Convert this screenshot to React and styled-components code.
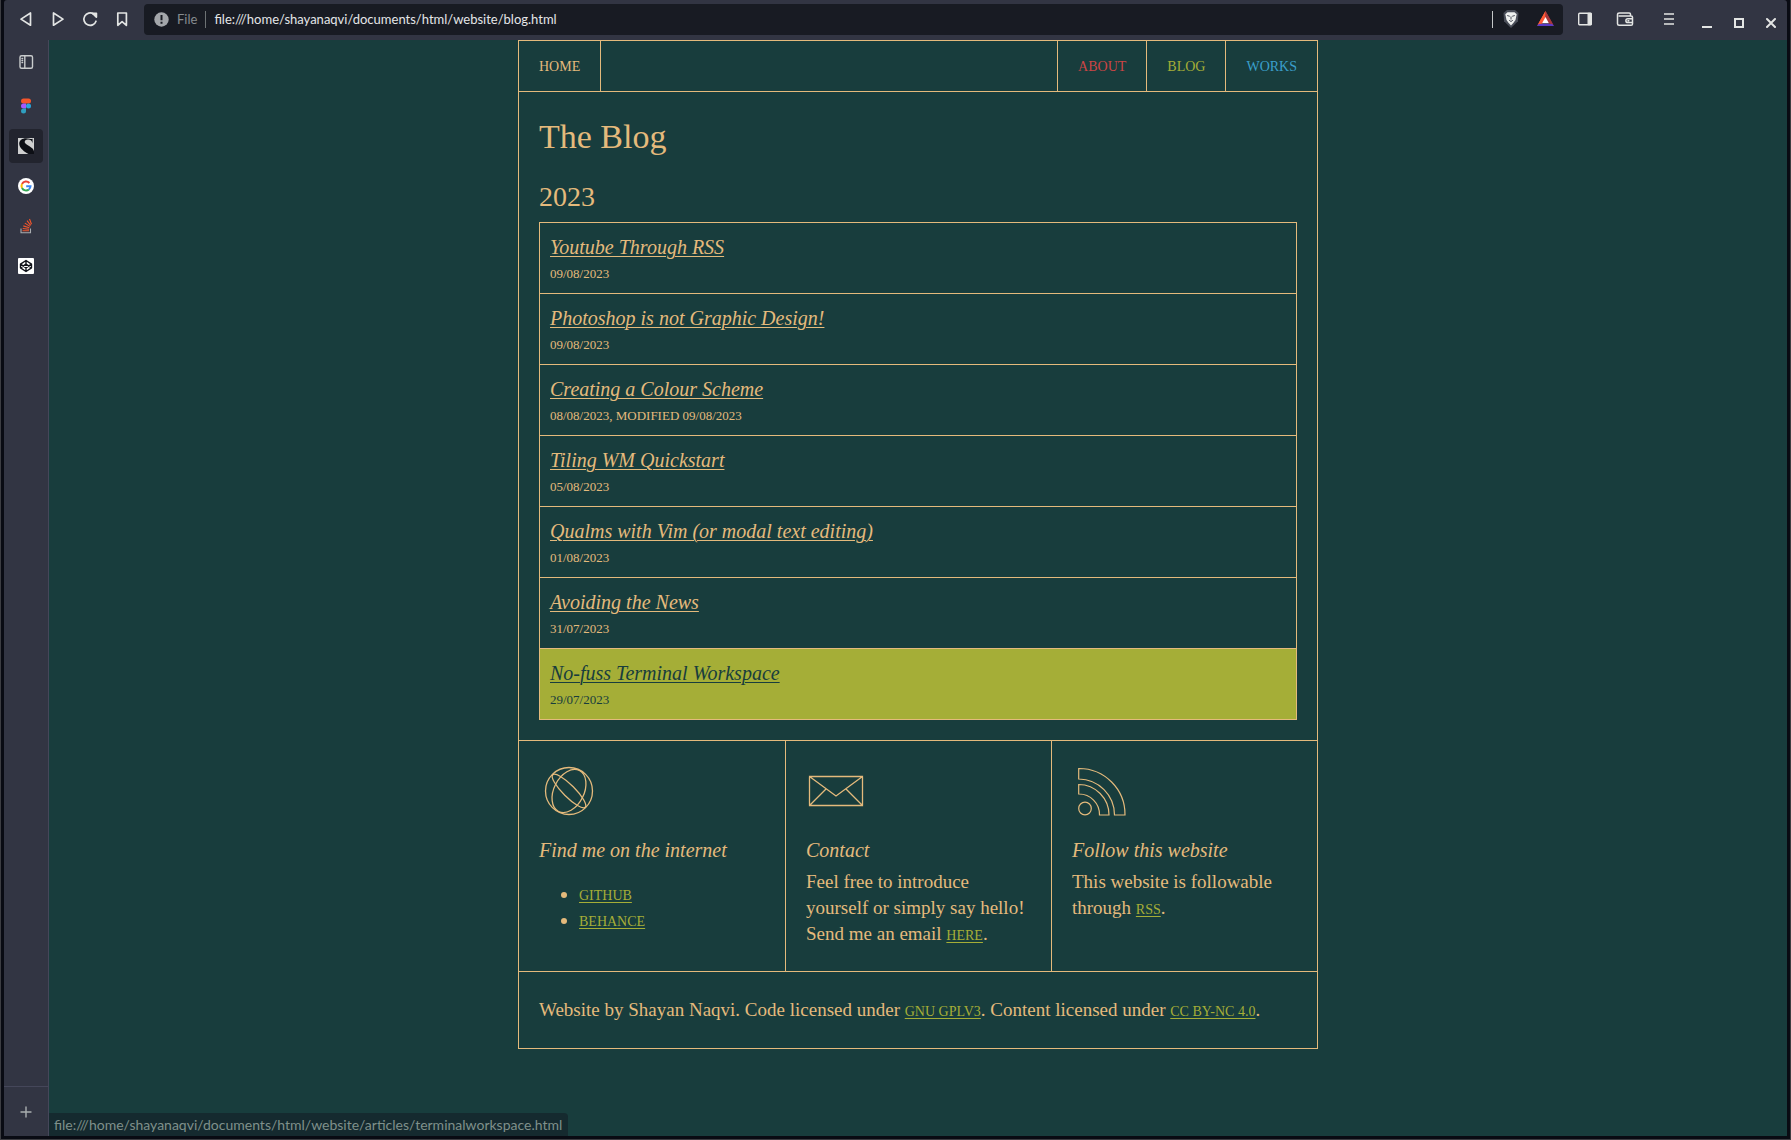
import React from "react";
import styled, { createGlobalStyle, css } from "styled-components";

const color = {
  chrome: "#323543",
  chromeLine: "#45475a",
  field: "#181b23",
  frame: "#090b13",
  edge: "#3c3d42",
  page: "#183d3d",
  sand: "#e4ba7c",
  moss: "#a5ae37",
  red: "#cc4545",
  blue: "#3a9fcb",
  icon: "#e3e5e4",
};

const serif = '"Liberation Serif", "Times New Roman", serif';
const sans = 'Lato, "Open Sans", sans-serif';

const GlobalStyle = createGlobalStyle`
  *, *::before, *::after { box-sizing: border-box; }
  body { margin: 0; background: ${color.frame}; }
  h1, h2, h3, p, ul, ol { margin: 0; padding: 0; font-weight: 400; }
`;

const Window = styled.div`
  display: flex;
  flex-direction: column;
  height: 100vh;
  padding: 0 3px 3px;
  border: 1px solid ${color.edge};
  border-top: 0;
  background: ${color.frame};
`;

const Toolbar = styled.header`
  display: flex;
  align-items: center;
  flex: none;
  height: 40px;
  padding: 0 0 2px 6px;
  background: ${color.chrome};
  border-radius: 3px 3px 0 0;
`;

const IconButton = styled.button`
  display: grid;
  place-items: center;
  width: ${(p) => p.$width || 32}px;
  height: 32px;
  padding: 0;
  border: 0;
  background: none;
  color: ${color.icon};
  svg { display: block; }
`;

const AddressBar = styled.div`
  display: flex;
  align-items: center;
  flex: 1;
  gap: 8px;
  height: 31px;
  margin: 0 4px 0 6px;
  padding: 0 2px 0 10px;
  border-radius: 4px;
  background: ${color.field};
  font: 13px/20px ${sans};
`;

const Scheme = styled.label`
  color: #868b8f;
`;

const Divider = styled.span`
  width: 1px;
  height: 17px;
  background: ${(p) => (p.$bright ? "#c4c7c8" : "#6d7274")};
`;

const AddressInput = styled.input`
  flex: 1;
  min-width: 0;
  padding: 0;
  border: 0;
  outline: 0;
  background: none;
  color: #e4e6e8;
  font: inherit;
`;

const Extensions = styled.div`
  display: flex;
  align-items: center;
`;

const Body = styled.div`
  display: flex;
  flex: 1;
  min-height: 0;
`;

const Sidebar = styled.nav`
  display: flex;
  flex-direction: column;
  align-items: center;
  flex: none;
  width: 45px;
  padding-top: 5px;
  background: ${color.chrome};
  border-right: 1px solid ${color.chromeLine};
`;

const Tabs = styled.div`
  display: flex;
  flex-direction: column;
  flex: 1;
  gap: 6px;
  padding-top: 10px;
`;

const Tab = styled.button`
  display: grid;
  place-items: center;
  width: 34px;
  height: 34px;
  padding: 0;
  border: 0;
  border-radius: 4px;
  color: #c9cccd;
  background: ${(p) => (p.$active ? "#22242e" : "none")};
`;

const NewTab = styled.button`
  display: grid;
  place-items: center;
  width: 100%;
  height: 50px;
  padding: 0;
  border: 0;
  border-top: 1px solid ${color.chromeLine};
  background: none;
  color: #a9aeb0;
`;

const Viewport = styled.div`
  position: relative;
  flex: 1;
  min-width: 0;
  overflow: hidden;
  background: ${color.page};
  color: ${color.sand};
  font: 19px/26px ${serif};
`;

const Status = styled.div`
  position: absolute;
  left: 0;
  bottom: 0;
  padding: 0 6px 0 5px;
  border-radius: 0 4px 0 0;
  background: #152a2f;
  color: #7f908b;
  font: 14px/23px ${sans};
`;

const Site = styled.div`
  max-width: 800px;
  margin: 0 auto;
  border: 1px solid ${color.sand};
`;

const SiteNav = styled.nav`
  display: flex;
  height: 51px;
  border-bottom: 1px solid ${color.sand};
`;

const NavLink = styled.a`
  display: flex;
  align-items: center;
  padding: 2px 20px 0;
  color: ${(p) => p.$color};
  font-size: 14px;
  text-transform: uppercase;
  text-decoration: none;
  ${(p) =>
    p.$home
      ? css`margin-right: auto; border-right: 1px solid ${color.sand};`
      : css`border-left: 1px solid ${color.sand};`}
`;

const Main = styled.main`
  padding: 20px;
`;

const Title = styled.h1`
  margin-bottom: 20px;
  font-size: 34px;
  line-height: 50px;
`;

const Year = styled.h2`
  margin-bottom: 10px;
  font-size: 28px;
  line-height: 30px;
`;

const Posts = styled.ol`
  list-style: none;
  border: 1px solid ${color.sand};
`;

const Post = styled.li`
  padding: 11px 10px 5px;
  color: ${(p) => (p.$active ? color.page : color.sand)};
  background: ${(p) => (p.$active ? color.moss : "none")};
  & + & { border-top: 1px solid ${color.sand}; }
`;

const PostLink = styled.a`
  display: block;
  width: fit-content;
  color: inherit;
  font-size: 20px;
  font-style: italic;
  line-height: 26px;
  text-underline-offset: 2px;
  text-decoration-thickness: 1px;
`;

const PostDate = styled.p`
  font-size: 13px;
  line-height: 28px;
  text-transform: uppercase;
`;

const Columns = styled.section`
  display: grid;
  grid-template-columns: repeat(3, 1fr);
  border-top: 1px solid ${color.sand};
  border-bottom: 1px solid ${color.sand};
`;

const Column = styled.div`
  padding: 20px 20px 24px;
  & + & { border-left: 1px solid ${color.sand}; }
  svg { display: block; margin-bottom: 16px; }
`;

const ColumnTitle = styled.h3`
  margin-bottom: 6px;
  font-size: 20px;
  font-style: italic;
  line-height: 26px;
`;

const LinkList = styled.ul`
  padding: 12px 0 0 40px;
`;

const TextLink = styled.a`
  color: ${color.moss};
  font-size: 14px;
  line-height: 14px;
  text-transform: uppercase;
  text-underline-offset: 2px;
  text-decoration-thickness: 1px;
`;

const SiteFooter = styled.footer`
  padding: 25px 20px;
`;

const Line = ({ size = 18, w = 1.5, children, ...rest }) => (
  <svg width={size} height={size} viewBox={`0 0 ${size} ${size}`} fill="none" stroke="currentColor"
    strokeWidth={w} strokeLinejoin="round" strokeLinecap="round" aria-hidden="true" {...rest}>
    {children}
  </svg>
);

const BackIcon = () => <Line w={1.7}><path d="M13.5 3v12.2L4 9.1z" /></Line>;
const ForwardIcon = () => <Line w={1.7}><path d="M4.5 3v12.2L14 9.1z" /></Line>;
const ReloadIcon = () => (
  <Line w={1.7}>
    <path d="M15 11.2A6.2 6.2 0 1 1 12.6 4" />
    <path d="M11.6 3.3h3.8v3.8z" fill="currentColor" />
  </Line>
);
const BookmarkIcon = () => <Line w={1.7}><path d="M4.8 3h8.6v12.3L9.1 11.6 4.8 15.3z" /></Line>;
const InfoIcon = () => (
  <svg width="15" height="15" viewBox="0 0 15 15" aria-hidden="true">
    <circle cx="7.5" cy="7.5" r="7.2" fill="#a3a6aa" />
    <path d="M6.5 3h2v5.3h-2zM6.5 9.7h2v2h-2z" fill={color.field} />
  </svg>
);
const BraveIcon = () => (
  <svg width="18" height="20" viewBox="0 0 18 20" aria-hidden="true">
    <path d="M5 1h8l3.5 3-.6 8.3L9 19l-6.9-6.7L1.5 4z" fill="#4a4e59" />
    <path d="M5.5 3.2h7l2.2 2-1.2 5.8-1.8 2.5L9 16.5l-2.7-3L4.5 11 3.3 5.2z" fill="#eef0ef" />
    <path d="M5.2 6.5l2.6.8M12.8 6.5l-2.6.8M9 7.5v3M7.2 11.3L9 12.5l1.8-1.2" stroke="#4a4e59" strokeWidth="1" fill="none" />
  </svg>
);
const RewardsIcon = () => (
  <svg width="19" height="18" viewBox="0 0 19 18" aria-hidden="true">
    <path d="M9.5 1L1 16l8.5-5.5z" fill="#ff5a36" />
    <path d="M9.5 1L18 16l-8.5-5.5z" fill="#a8373c" />
    <path d="M1 16h17l-2-2.200H3z" fill="#5b3bc4" />
    <path d="M2.300 13.800L9.500 1v7l-3.400 5.800z" fill="#ff5a36" />
    <path d="M16.700 13.800L9.500 1v7l3.400 5.800z" fill="#a8373c" />
    <path d="M9.5 7l3.400 6.200H6.100z" fill="#fff" />
  </svg>
);
const PanelIcon = () => (
  <Line w={1.4}>
    <rect x="2.7" y="3.2" width="12.6" height="11.6" rx="1" />
    <path d="M12.2 3.5h2.900v11h-2.900z" fill="currentColor" />
  </Line>
);
const WalletIcon = () => (
  <Line w={1.5}>
    <path d="M14.500 6V4.200c0-.8-.5-1.200-1.300-1.200H3.500C2.300 3 1.500 3.700 1.500 4.700v9c0 .9.7 1.500 1.600 1.500h12c.8 0 1.400-.6 1.400-1.300V7.200c0-.7-.6-1.200-1.300-1.200H3.200" />
    <path d="M16.300 8.800h-4.500a1.900 1.900 0 0 0 0 3.800h4.500M12 10.700h.8" />
  </Line>
);
const MenuIcon = () => <Line w={1.7} strokeLinecap="butt"><path d="M4 4h10M4 9h10M4 14h10" /></Line>;
const MinimizeIcon = () => <Line w={2} strokeLinecap="butt"><path d="M4 17h10" /></Line>;
const MaximizeIcon = () => <Line w={2} strokeLinejoin="miter"><rect x="5" y="9" width="8" height="8" /></Line>;
const CloseIcon = () => <Line w={2}><path d="M5 9l8 8M13 9l-8 8" /></Line>;

const SidebarIcon = () => (
  <Line w={1.4}>
    <rect x="3" y="2.700" width="12.500" height="12.600" rx="1.5" />
    <path d="M7.800 3v12M5 5.500h.6M5 7.500h.6M5 9.500h.6" />
  </Line>
);
const FigmaIcon = () => (
  <svg width="12" height="16" viewBox="0 0 12 16" aria-hidden="true">
    <rect x="1" y="0.5" width="10" height="5" rx="2.5" fill="#f4552b" />
    <path d="M6 5.500H3.500a2.500 2.500 0 0 0 0 5H6z" fill="#a259ff" />
    <circle cx="8.500" cy="8" r="2.5" fill="#2aa5dc" />
    <path d="M6 10.500H3.500a2.500 2.500 0 1 0 2.500 2.500z" fill="#2f9fc0" />
  </svg>
);
const SiteIcon = () => (
  <svg width="16" height="16" viewBox="0 0 16 16" aria-hidden="true">
    <rect width="16" height="16" fill="#cfd0d0" />
    <path d="M14.500 5.200C14 2.600 12.200 1.500 10 1.500 7.800 1.500 6.500 2.800 6.700 4.300 7.200 7 16 9.300 16 13.500V16h-5.500C7 14.500 1.200 10 1.200 5.800 1.200 2.300 4.200.2 8 .2c2.600 0 4.300.9 5.300.9.700 0 1-.3 1.300-.7z" fill="#0d0f15" />
  </svg>
);
const GoogleIcon = () => (
  <svg width="16" height="16" viewBox="0 0 16 16" fill="none" strokeWidth="2" aria-hidden="true">
    <circle cx="8" cy="8" r="8" fill="#fff" />
    <path d="M11.400 5A4.500 4.500 0 0 0 4 6" stroke="#ea4335" />
    <path d="M4 6a4.500 4.500 0 0 0 0 4" stroke="#fbbc05" />
    <path d="M4 10a4.500 4.500 0 0 0 6.900 1.400" stroke="#34a853" />
    <path d="M10.900 11.400A4.500 4.500 0 0 0 12.500 8.200H8.200" stroke="#3b86f0" />
  </svg>
);
const StackIcon = () => (
  <svg width="14" height="16" viewBox="0 0 14 16" fill="none" strokeWidth="1.1" aria-hidden="true">
    <path d="M2 10.500v4.300h9.500v-4.300" stroke="#a9acb0" />
    <path d="M3.500 12.800h6.500M3.700 10.500l6.400.7M4.300 7.900l6 1.800M5.800 5.100l5.200 3.300M8 2.600l3.700 4.800M10.500 1l2 5.200" stroke="#f2552c" />
  </svg>
);
const CodepenIcon = () => (
  <svg width="16" height="16" viewBox="0 0 16 16" fill="none" aria-hidden="true">
    <rect width="16" height="16" rx="1" fill="#fff" />
    <path d="M8 2.500l5.500 3.700v3.600L8 13.500 2.500 9.800V6.200zM8 2.500v3.600M8 9.900v3.600M2.500 6.200L8 9.900l5.500-3.700M2.500 9.800L8 6.100l5.500 3.700" stroke="#11131a" strokeWidth="1.4" strokeLinejoin="round" />
  </svg>
);
const PlusIcon = () => <Line size={12} w={1.4}><path d="M6 1v10M1 6h10" /></Line>;

const GlobeArt = () => (
  <Line size={60} w={1.3}>
    <circle cx="30" cy="30" r="23.5" />
    <ellipse cx="30" cy="30" rx="15" ry="23" transform="rotate(27 30 30)" />
    <ellipse cx="30" cy="30" rx="23" ry="6" transform="rotate(45 30 30)" />
  </Line>
);
const MailArt = () => (
  <Line size={60} w={1.3} strokeLinejoin="miter">
    <path d="M3.500 15.500h53v29h-53zM3.500 15.500L30 35l26.500-19.500M3.500 44.500L20 28M56.500 44.500L40 28" />
  </Line>
);
const FeedArt = () => (
  <Line size={60} w={1.2} strokeLinejoin="miter">
    <circle cx="13" cy="47.5" r="6.3" />
    <path d="M6.700 7.500A46 46 0 0 1 53 54H42.500A36 36 0 0 0 6.700 18zM6.700 23.500A30.500 30.500 0 0 1 37 54H27.500A20.500 20.500 0 0 0 6.700 33z" />
  </Line>
);

const navLinks = [
  { label: "About", color: color.red },
  { label: "Blog", color: color.moss },
  { label: "Works", color: color.blue },
];

const posts = [
  { title: "Youtube Through RSS", date: "09/08/2023" },
  { title: "Photoshop is not Graphic Design!", date: "09/08/2023" },
  { title: "Creating a Colour Scheme", date: "08/08/2023, modified 09/08/2023" },
  { title: "Tiling WM Quickstart", date: "05/08/2023" },
  { title: "Qualms with Vim (or modal text editing)", date: "01/08/2023" },
  { title: "Avoiding the News", date: "31/07/2023" },
  { title: "No-fuss Terminal Workspace", date: "29/07/2023", active: true },
];

const tabs = [
  { name: "Figma", Icon: FigmaIcon },
  { name: "The Blog", Icon: SiteIcon, active: true },
  { name: "Google", Icon: GoogleIcon },
  { name: "Stack Overflow", Icon: StackIcon },
  { name: "CodePen", Icon: CodepenIcon },
];

export default function App() {
  return (
    <Window>
      <GlobalStyle />
      <Toolbar>
        <IconButton aria-label="Back"><BackIcon /></IconButton>
        <IconButton aria-label="Forward"><ForwardIcon /></IconButton>
        <IconButton aria-label="Reload"><ReloadIcon /></IconButton>
        <IconButton aria-label="Bookmark"><BookmarkIcon /></IconButton>
        <AddressBar>
          <InfoIcon />
          <Scheme htmlFor="address">File</Scheme>
          <Divider />
          <AddressInput id="address" defaultValue="file:///home/shayanaqvi/documents/html/website/blog.html" />
          <Extensions>
            <Divider $bright />
            <IconButton $width={36} aria-label="Shields"><BraveIcon /></IconButton>
            <IconButton aria-label="Rewards"><RewardsIcon /></IconButton>
          </Extensions>
        </AddressBar>
        <IconButton $width={36} aria-label="Side panel"><PanelIcon /></IconButton>
        <IconButton $width={44} aria-label="Wallet"><WalletIcon /></IconButton>
        <IconButton $width={44} aria-label="Menu"><MenuIcon /></IconButton>
        <IconButton aria-label="Minimize"><MinimizeIcon /></IconButton>
        <IconButton aria-label="Maximize"><MaximizeIcon /></IconButton>
        <IconButton aria-label="Close"><CloseIcon /></IconButton>
      </Toolbar>
      <Body>
        <Sidebar>
          <Tab aria-label="Toggle tabs"><SidebarIcon /></Tab>
          <Tabs>
            {tabs.map(({ name, Icon, active }) => (
              <Tab key={name} aria-label={name} $active={active}><Icon /></Tab>
            ))}
          </Tabs>
          <NewTab aria-label="New tab"><PlusIcon /></NewTab>
        </Sidebar>
        <Viewport>
          <Site>
            <SiteNav>
              <NavLink href="#home" $home $color={color.sand}>Home</NavLink>
              {navLinks.map((l) => (
                <NavLink key={l.label} href={`#${l.label.toLowerCase()}`} $color={l.color}>{l.label}</NavLink>
              ))}
            </SiteNav>
            <Main>
              <Title>The Blog</Title>
              <Year>2023</Year>
              <Posts>
                {posts.map((p) => (
                  <Post key={p.title} $active={p.active}>
                    <PostLink href="#post">{p.title}</PostLink>
                    <PostDate>{p.date}</PostDate>
                  </Post>
                ))}
              </Posts>
            </Main>
            <Columns>
              <Column>
                <GlobeArt />
                <ColumnTitle>Find me on the internet</ColumnTitle>
                <LinkList>
                  <li><TextLink href="#github">Github</TextLink></li>
                  <li><TextLink href="#behance">Behance</TextLink></li>
                </LinkList>
              </Column>
              <Column>
                <MailArt />
                <ColumnTitle>Contact</ColumnTitle>
                <p>
                  Feel free to introduce yourself or simply say hello! Send me an email{" "}
                  <TextLink href="#email">here</TextLink>.
                </p>
              </Column>
              <Column>
                <FeedArt />
                <ColumnTitle>Follow this website</ColumnTitle>
                <p>This website is followable through <TextLink href="#rss">RSS</TextLink>.</p>
              </Column>
            </Columns>
            <SiteFooter>
              <p>
                Website by Shayan Naqvi. Code licensed under <TextLink href="#gpl">GNU GPLv3</TextLink>. Content
                licensed under <TextLink href="#cc">CC BY-NC 4.0</TextLink>.
              </p>
            </SiteFooter>
          </Site>
          <Status>file:///home/shayanaqvi/documents/html/website/articles/terminalworkspace.html</Status>
        </Viewport>
      </Body>
    </Window>
  );
}
